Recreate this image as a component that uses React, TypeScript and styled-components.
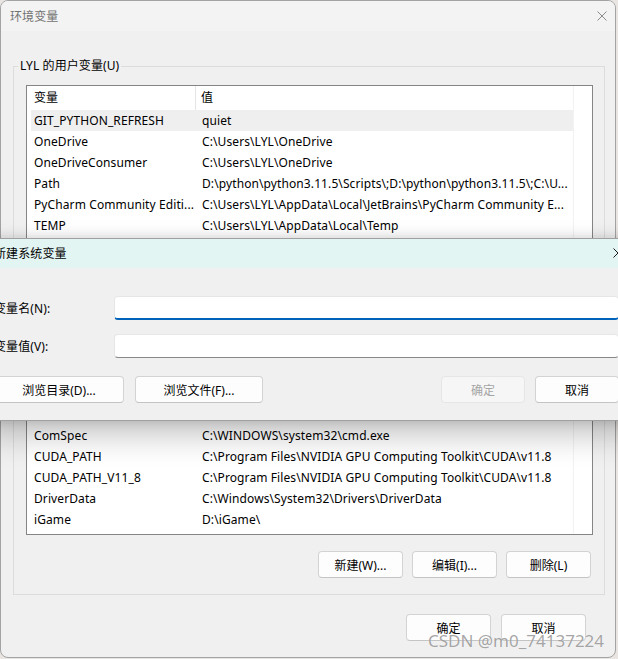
import React from "react";
import styled, { createGlobalStyle } from "styled-components";

const GlobalStyle = createGlobalStyle`
  html, body {
    margin: 0;
    padding: 0;
  }
  body {
    background: #e8e5e2;
    font-family: "Noto Sans", "Noto Sans CJK SC", sans-serif;
    font-size: 12px;
    letter-spacing: 0.1px;
    color: #000;
    overflow: hidden;
  }
`;

const Desktop = styled.div`
  position: relative;
  width: 618px;
  height: 659px;
  overflow: hidden;
`;

const Window = styled.div`
  box-sizing: border-box;
  width: 616px;
  height: 658px;
  display: flex;
  flex-direction: column;
  background: #f0f0f0;
  border: 1px solid #a3a3a3;
  border-radius: 8px;
  overflow: hidden;
`;

const TitleBar = styled.div<{ $active?: boolean }>`
  flex: none;
  height: 30px;
  display: flex;
  align-items: center;
  justify-content: space-between;
  padding: 0 8px 0 9px;
  background: ${(p) => (p.$active ? "#e3f5f3" : "#f3f3f3")};
  color: ${(p) => (p.$active ? "#000" : "#727272")};
`;

const CloseIcon = ({ color }: { color: string }) => (
  <svg width="10" height="10" viewBox="0 0 10 10">
    <path d="M0.5 0.5 L9.5 9.5 M9.5 0.5 L0.5 9.5" stroke={color} strokeWidth="1" fill="none" />
  </svg>
);

const Content = styled.div`
  flex: 1;
  display: flex;
  flex-direction: column;
  padding: 27px 10px 0 12px;
`;

const Group = styled.fieldset`
  margin: 0;
  padding: 11px 11px 16px 12px;
  border: 1px solid #dcdcdc;
  min-width: 0;
`;

const GroupLabel = styled.legend`
  margin-left: -8px;
  padding: 0 2px;
  line-height: 16px;
`;

const List = styled.div`
  box-sizing: border-box;
  height: 450px;
  display: flex;
  background: #fff;
  border: 1px solid #858585;
`;

const ListMain = styled.div`
  flex: 1;
  min-width: 0;
  display: flex;
  flex-direction: column;
`;

const ScrollTrack = styled.div`
  width: 18px;
  border-left: 1px solid #f2f2f2;
`;

const Header = styled.div`
  display: grid;
  grid-template-columns: 169px 1fr;
  height: 24px;
  line-height: 24px;
`;

const HeaderCell = styled.div<{ $divider?: boolean }>`
  padding-left: ${(p) => (p.$divider ? "7px" : "5px")};
  border-right: ${(p) => (p.$divider ? "1px solid #e5e5e5" : "none")};
`;

const Rows = styled.div`
  padding-left: 4px;
`;

const Row = styled.div<{ $selected?: boolean }>`
  display: grid;
  grid-template-columns: 171px 1fr;
  height: 21px;
  line-height: 21px;
  white-space: nowrap;
  background: ${(p) => (p.$selected ? "#efefef" : "transparent")};
`;

const Cell = styled.div<{ $first?: boolean }>`
  overflow: hidden;
  padding-left: ${(p) => (p.$first ? "3px" : "0")};
`;

const ButtonBar = styled.div`
  display: flex;
  justify-content: flex-end;
  gap: 9px;
  margin-top: 16px;
  padding-right: 2px;
`;

const Footer = styled.div`
  display: flex;
  justify-content: flex-end;
  gap: 10px;
  padding: 19px 19px 0 0;
`;

const Button = styled.button<{ $width?: number }>`
  box-sizing: border-box;
  width: ${(p) => p.$width ?? 85}px;
  height: 27px;
  padding: 0;
  font: inherit;
  color: #000;
  background: #fdfdfd;
  border: 1px solid #d3d3d3;
  border-bottom-color: #c4c4c4;
  border-radius: 4px;

  &:disabled {
    color: #a5a5a5;
    background: #f6f6f6;
    border-color: #e6e6e6;
  }
`;

const Dialog = styled.div`
  position: absolute;
  left: -18px;
  top: 238px;
  width: 659px;
  box-sizing: border-box;
  background: #f0f0f0;
  border: 1px solid #a0a0a0;
  border-radius: 8px;
  overflow: hidden;
  box-shadow: 0 14px 32px rgba(0, 0, 0, 0.24), 0 0 12px rgba(0, 0, 0, 0.14);
`;

const DialogTitle = styled(TitleBar)`
  height: 29px;
  padding: 0 17px 2px 11px;
  box-sizing: border-box;
`;

const DialogBody = styled.div`
  display: flex;
  flex-direction: column;
  gap: 14px;
  padding: 28px 21px 17px 11px;
`;

const Field = styled.label`
  display: grid;
  grid-template-columns: 120px 1fr;
  align-items: center;
`;

const TextInput = styled.input<{ $focused?: boolean }>`
  box-sizing: border-box;
  height: 24px;
  margin: 0;
  padding: 0 8px;
  font: inherit;
  background: #fff;
  border: 1px solid #e6e6e6;
  border-bottom: ${(p) => (p.$focused ? "2px solid #0063b9" : "1px solid #878787")};
  border-radius: 4px;
  outline: none;
`;

const DialogButtons = styled.div`
  display: flex;
  gap: 11px;
  margin-top: 4px;
`;

const Spacer = styled.div`
  flex: 1;
`;

const DialogActions = styled.div`
  display: flex;
  gap: 10px;
`;

const Watermark = styled.div`
  position: absolute;
  left: 428px;
  top: 630px;
  font-family: "Noto Sans", sans-serif;
  font-size: 17px;
  line-height: 22px;
  letter-spacing: 0;
  color: rgba(105, 105, 105, 0.6);
  text-shadow: 0 0 1px rgba(255, 255, 255, 0.9);
  pointer-events: none;
`;

const variables: [string, string][] = [
  ["GIT_PYTHON_REFRESH", "quiet"],
  ["OneDrive", "C:\\Users\\LYL\\OneDrive"],
  ["OneDriveConsumer", "C:\\Users\\LYL\\OneDrive"],
  ["Path", "D:\\python\\python3.11.5\\Scripts\\;D:\\python\\python3.11.5\\;C:\\U..."],
  ["PyCharm Community Editi...", "C:\\Users\\LYL\\AppData\\Local\\JetBrains\\PyCharm Community E..."],
  ["TEMP", "C:\\Users\\LYL\\AppData\\Local\\Temp"],
  ["TMP", "C:\\Users\\LYL\\AppData\\Local\\Temp"],
  ["ChocolateyInstall", "C:\\ProgramData\\chocolatey"],
  ["ChocolateyLastPathUpdate", "133419825573408117"],
  ["CLASSPATH", ".;%JAVA_HOME%\\lib"],
  ["CUDA_BIN", "C:\\Program Files\\NVIDIA GPU Computing Toolkit\\CUDA\\v11.8\\bin"],
  ["JAVA_HOME", "C:\\Program Files\\Java\\jdk-17"],
  ["NUMBER_OF_PROCESSORS", "16"],
  ["OS", "Windows_NT"],
  ["PATHEXT", ".COM;.EXE;.BAT;.CMD;.VBS;.VBE;.JS;.JSE;.WSF;.WSH;.MSC"],
  ["ComSpec", "C:\\WINDOWS\\system32\\cmd.exe"],
  ["CUDA_PATH", "C:\\Program Files\\NVIDIA GPU Computing Toolkit\\CUDA\\v11.8"],
  ["CUDA_PATH_V11_8", "C:\\Program Files\\NVIDIA GPU Computing Toolkit\\CUDA\\v11.8"],
  ["DriverData", "C:\\Windows\\System32\\Drivers\\DriverData"],
  ["iGame", "D:\\iGame\\"],
];

const App: React.FunctionComponent = () => (
  <Desktop>
    <GlobalStyle />
    <Window>
      <TitleBar>
        <span>环境变量</span>
        <CloseIcon color="#8a8a8a" />
      </TitleBar>
      <Content>
        <Group>
          <GroupLabel>LYL 的用户变量(U)</GroupLabel>
          <List>
            <ListMain>
              <Header>
                <HeaderCell $divider>变量</HeaderCell>
                <HeaderCell>值</HeaderCell>
              </Header>
              <Rows>
                {variables.map(([name, value], i) => (
                  <Row key={name} $selected={i === 0}>
                    <Cell $first>{name}</Cell>
                    <Cell>{value}</Cell>
                  </Row>
                ))}
              </Rows>
            </ListMain>
            <ScrollTrack />
          </List>
          <ButtonBar>
            <Button>新建(W)...</Button>
            <Button>编辑(I)...</Button>
            <Button>删除(L)</Button>
          </ButtonBar>
        </Group>
        <Footer>
          <Button>确定</Button>
          <Button>取消</Button>
        </Footer>
      </Content>
    </Window>

    <Dialog>
      <DialogTitle $active>
        <span>新建系统变量</span>
        <CloseIcon color="#1a1a1a" />
      </DialogTitle>
      <DialogBody>
        <Field>
          <span>变量名(N):</span>
          <TextInput $focused defaultValue="" />
        </Field>
        <Field>
          <span>变量值(V):</span>
          <TextInput defaultValue="" />
        </Field>
        <DialogButtons>
          <Button $width={130}>浏览目录(D)...</Button>
          <Button $width={128}>浏览文件(F)...</Button>
          <Spacer />
          <DialogActions>
            <Button $width={84} disabled>
              确定
            </Button>
            <Button $width={84}>取消</Button>
          </DialogActions>
        </DialogButtons>
      </DialogBody>
    </Dialog>

    <Watermark>CSDN @m0_74137224</Watermark>
  </Desktop>
);

export default App;
